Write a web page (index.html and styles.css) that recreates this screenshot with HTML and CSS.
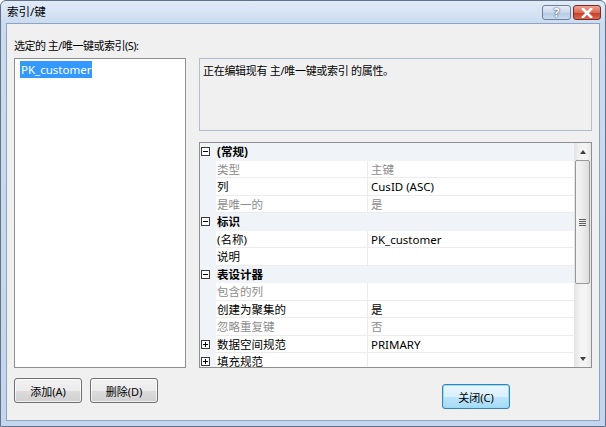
FILE: index.html
```html
<!DOCTYPE html>
<html lang="zh-CN">

<head>
  <meta charset="UTF-8">
  <title>索引/键</title>
  <link rel="stylesheet" href="styles.css">
</head>

<body>
  <div class="window">
    <div class="titlebar">
      <span class="title">索引/键</span>
      <div class="caption-btns">
        <span class="cap-btn cap-help">?</span>
        <span class="cap-btn cap-close">
          <svg width="12" height="10" viewBox="0 0 12 10">
            <path d="M2 1 L10 9 M10 1 L2 9" stroke="#fff" stroke-width="2.6" stroke-linecap="square" />
          </svg>
        </span>
      </div>
    </div>

    <div class="client">
      <div class="label">选定的 主/唯一键或索引(S):</div>
      <div class="main">
        <div class="listbox">
          <span class="list-item list-item-active">PK_customer</span>
        </div>
        <div class="right-panel">
          <div class="desc">正在编辑现有 主/唯一键或索引 的属性。</div>
          <div class="grid">
            <div class="rows">
              <div class="row row-cat"><span class="gutter"><i class="toggle toggle-minus"></i></span><span class="cat-name">(常规)</span></div>
              <div class="row"><span class="gutter"></span><span class="name dim">类型</span><span class="value dim">主键</span></div>
              <div class="row"><span class="gutter"></span><span class="name">列</span><span class="value">CusID (ASC)</span></div>
              <div class="row"><span class="gutter"></span><span class="name dim">是唯一的</span><span class="value dim">是</span></div>
              <div class="row row-cat"><span class="gutter"><i class="toggle toggle-minus"></i></span><span class="cat-name">标识</span></div>
              <div class="row"><span class="gutter"></span><span class="name">(名称)</span><span class="value">PK_customer</span></div>
              <div class="row"><span class="gutter"></span><span class="name">说明</span><span class="value"></span></div>
              <div class="row row-cat"><span class="gutter"><i class="toggle toggle-minus"></i></span><span class="cat-name">表设计器</span></div>
              <div class="row"><span class="gutter"></span><span class="name dim">包含的列</span><span class="value"></span></div>
              <div class="row"><span class="gutter"></span><span class="name">创建为聚集的</span><span class="value">是</span></div>
              <div class="row"><span class="gutter"></span><span class="name dim">忽略重复键</span><span class="value dim">否</span></div>
              <div class="row"><span class="gutter"><i class="toggle toggle-plus"></i></span><span class="name">数据空间规范</span><span class="value">PRIMARY</span></div>
              <div class="row"><span class="gutter"><i class="toggle toggle-plus"></i></span><span class="name">填充规范</span><span class="value"></span></div>
            </div>
            <div class="scrollbar">
              <div class="sb-btn"><i class="arrow-up"></i></div>
              <div class="sb-track">
                <div class="sb-thumb"><i class="grip"></i></div>
              </div>
              <div class="sb-btn"><i class="arrow-down"></i></div>
            </div>
          </div>
        </div>
      </div>
      <div class="buttons">
        <span class="btn">添加(A)</span>
        <span class="btn">删除(D)</span>
        <span class="btn btn-default">关闭(C)</span>
      </div>
    </div>
  </div>
</body>

</html>
```

FILE: styles.css
```css
* {
  margin: 0;
  padding: 0;
  box-sizing: border-box;
}

body {
  width: 606px;
  height: 427px;
  overflow: hidden;
  font-family: "Noto Sans", "Noto Sans CJK SC", sans-serif;
  font-size: 11.5px;
  color: #000;
  background: #fff;
}

.window {
  width: 606px;
  height: 427px;
  border: 1px solid #62728a;
  border-radius: 6px 6px 0 0;
  background: linear-gradient(#e1ebf7, #cbdcf0 22px, #c4d6ed);
  display: flex;
  flex-direction: column;
}

/* 标题栏 */
.titlebar {
  height: 22px;
  display: flex;
  justify-content: space-between;
  padding: 0 4px 0 6px;
}

.title {
  line-height: 22px;
  font-size: 11.5px;
}

.caption-btns {
  display: flex;
  gap: 2px;
  margin-top: 4px;
}

.cap-btn {
  width: 29px;
  height: 15px;
  border: 1px solid #6d7f98;
  border-radius: 3px;
  display: flex;
  align-items: center;
  justify-content: center;
}

.cap-help {
  background: linear-gradient(#e6eef8, #c9d8ea 50%, #b4c8e0 51%, #c9dcf0);
  color: #fff;
  font-weight: bold;
  font-size: 12px;
  line-height: 13px;
  text-shadow: 0 0 2px #3c4e66, 0 0 1px #3c4e66;
}

.cap-close {
  width: 28px;
  border-color: #7a2a22;
  background: linear-gradient(#eba395, #da6a55 50%, #c63b24 51%, #d86a52);
}

/* 客户区 */
.client {
  flex: 1;
  margin: 0 5px 5px;
  border: 1px solid #8ea3bf;
  background: #f0f0f0;
  padding: 15px 7px 0 7px;
  display: flex;
  flex-direction: column;
}

.label {
  line-height: 14px;
  margin-bottom: 5px;
  font-size: 11px;
  letter-spacing: -0.5px;
}

.main {
  display: flex;
  gap: 13px;
  height: 310px;
}

.listbox {
  width: 172px;
  border: 1px solid #8e8f8f;
  background: #fff;
  padding: 2px 0 0 5px;
}

.list-item {
  display: inline-block;
  height: 17px;
  line-height: 17px;
  padding: 0 1px;
}

.list-item-active {
  background: #3399ff;
  color: #fff;
}

.right-panel {
  width: 393px;
  display: flex;
  flex-direction: column;
}

.desc {
  height: 73px;
  border: 1px solid #b1bdcd;
  padding: 4px 3px;
  line-height: 16px;
  margin-bottom: 11px;
  font-size: 11px;
  letter-spacing: -0.3px;
}

/* 属性网格 */
.grid {
  flex: 1;
  display: flex;
  border: 1px solid #8e8f8f;
  background: #fff;
  overflow: hidden;
}

.rows {
  flex: 1;
  overflow: hidden;
}

.row {
  display: flex;
  height: 17.5px;
  line-height: 17px;
}

.gutter {
  width: 16px;
  flex: none;
  background: #f0f3f8;
  display: flex;
  align-items: center;
  padding-left: 1px;
}

.name {
  width: 152px;
  flex: none;
  padding-left: 1px;
  border-right: 1px solid #ececec;
  border-bottom: 1px solid #ececec;
  white-space: nowrap;
}

.value {
  flex: 1;
  padding-left: 3px;
  border-bottom: 1px solid #ececec;
  white-space: nowrap;
}

.dim {
  color: #8d8d8d;
}

.row-cat {
  background: #f0f3f8;
}

.cat-name {
  padding-left: 1px;
  font-weight: bold;
}

.toggle {
  width: 9px;
  height: 9px;
  border: 1px solid #3a3a3a;
  background: #fff;
  position: relative;
}

.toggle::before {
  content: "";
  position: absolute;
  left: 1px;
  top: 3px;
  width: 5px;
  height: 1px;
  background: #000;
}

.toggle-plus::after {
  content: "";
  position: absolute;
  left: 3px;
  top: 1px;
  width: 1px;
  height: 5px;
  background: #000;
}

/* 滚动条 */
.scrollbar {
  width: 17px;
  flex: none;
  display: flex;
  flex-direction: column;
  background: linear-gradient(90deg, #e3e3e3, #f4f4f4 40%, #f4f4f4 70%, #e8e8e8);
}

.sb-btn {
  height: 17px;
  display: flex;
  align-items: center;
  justify-content: center;
}

.arrow-up {
  border-left: 3.5px solid transparent;
  border-right: 3.5px solid transparent;
  border-bottom: 4px solid #404040;
}

.arrow-down {
  border-left: 3.5px solid transparent;
  border-right: 3.5px solid transparent;
  border-top: 4px solid #404040;
}

.sb-track {
  flex: 1;
  padding: 0 1px;
}

.sb-thumb {
  height: 124px;
  border: 1px solid #979797;
  border-radius: 2px;
  background: linear-gradient(90deg, #f4f4f4, #ececec 50%, #dcdcdc);
  display: flex;
  align-items: center;
  justify-content: center;
}

.grip {
  width: 7px;
  height: 7px;
  background: repeating-linear-gradient(#5f5f5f 0 1px, transparent 1px 2px);
}

/* 底部按钮 */
.buttons {
  display: flex;
  align-items: flex-start;
  gap: 8px;
  margin-top: 10px;
}

.btn {
  width: 68px;
  height: 25px;
  border: 1px solid #707070;
  border-radius: 3px;
  background: linear-gradient(#f2f2f2, #ebebeb 50%, #dddddd 51%, #cfcfcf);
  box-shadow: inset 0 0 0 1px rgba(255, 255, 255, .7);
  display: flex;
  align-items: center;
  justify-content: center;
  font-size: 11px;
}

.btn-default {
  margin-left: auto;
  margin-right: 82px;
  margin-top: 6px;
  border-color: #3c7fb1;
  background: linear-gradient(#eaf6fd, #d9f0fc 50%, #bee6fd 51%, #a7d9f5);
  box-shadow: inset 0 0 0 1px #8ee0fb;
}
```
